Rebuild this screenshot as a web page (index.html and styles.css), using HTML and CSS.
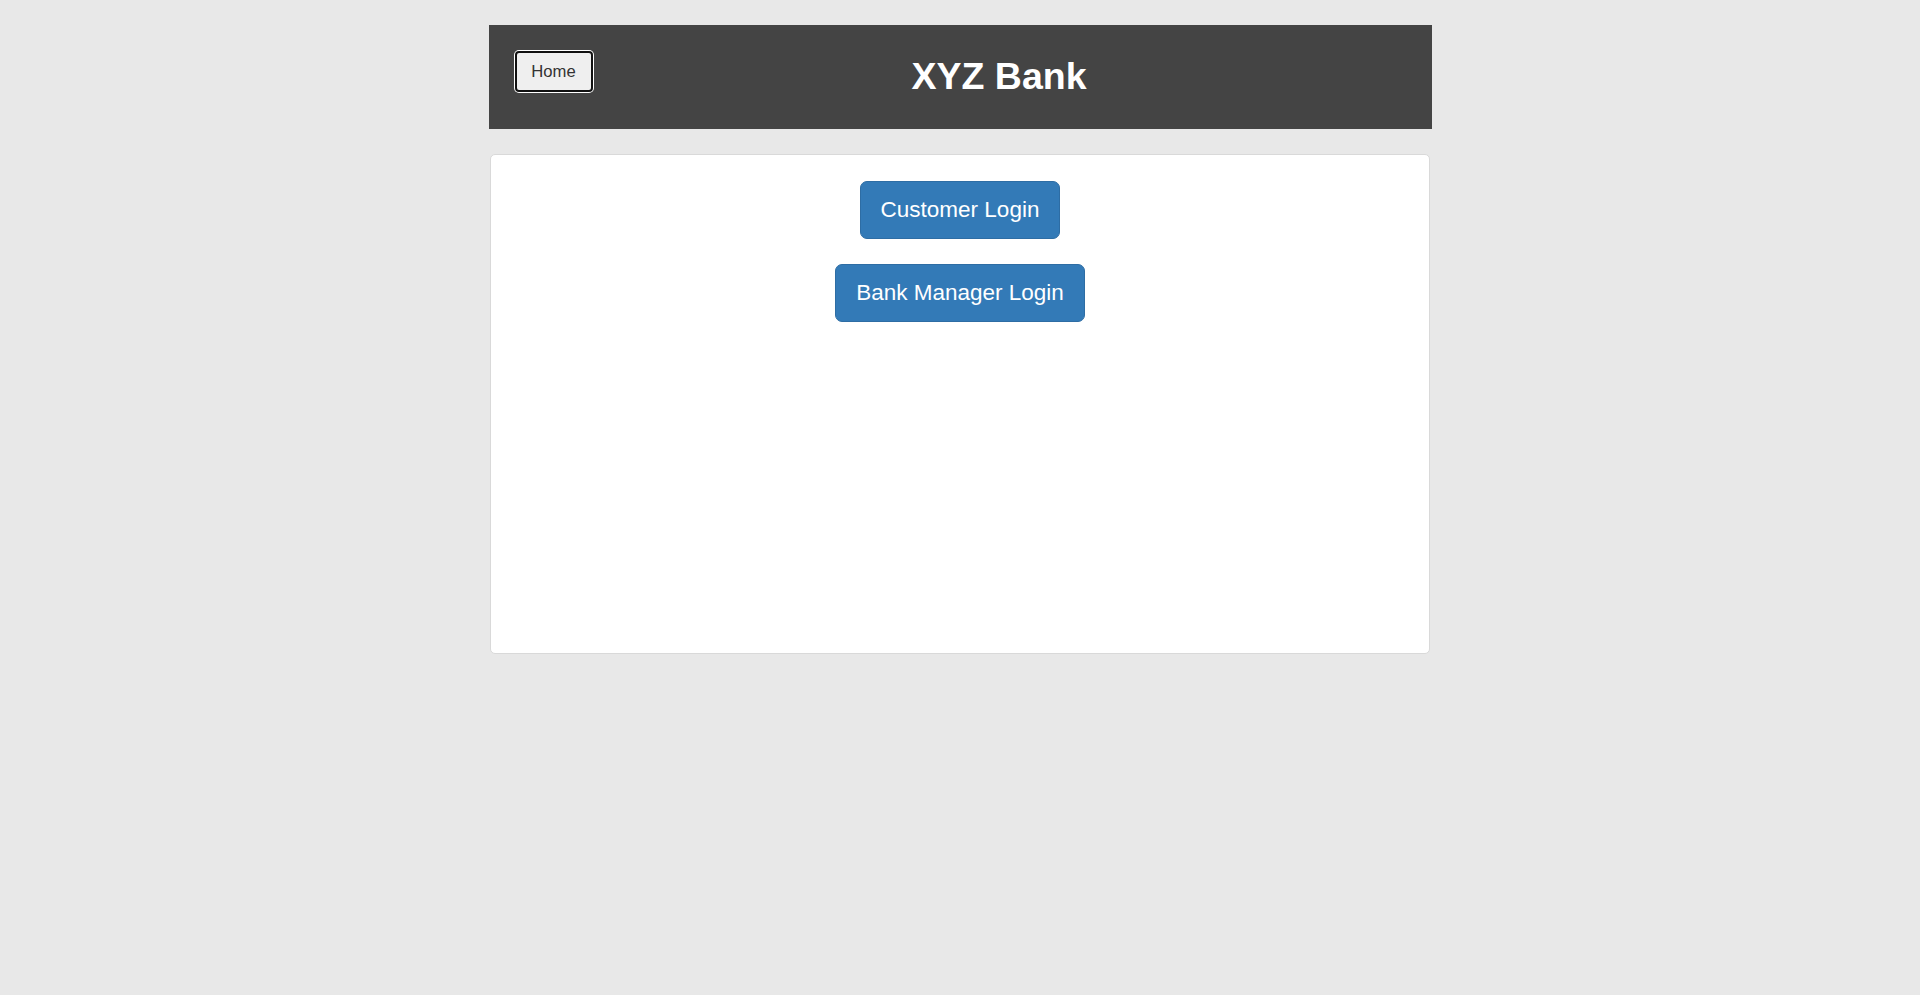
FILE: index.html
```html
<!DOCTYPE html>
<html lang="en">
<head>
<meta charset="utf-8">
<title>XYZ Bank</title>
<link rel="stylesheet" href="styles.css">
</head>
<body>
<div class="page">
  <header class="header">
    <button class="home-btn" type="button">Home</button>
    <strong class="main-heading">XYZ Bank</strong>
  </header>
  <main class="card">
    <button class="btn-primary" type="button">Customer Login</button>
    <button class="btn-primary" type="button">Bank Manager Login</button>
  </main>
</div>
</body>
</html>
```
FILE: styles.css
```css
html, body {
  margin: 0;
  padding: 0;
}
body {
  background: #e8e8e8;
  font-family: "Liberation Sans", Arial, sans-serif;
  min-height: 995px;
}
.page {
  width: 943px;
  margin: 25px auto 0;
  display: flex;
  flex-direction: column;
  align-items: center;
  gap: 25px;
}
.header {
  box-sizing: border-box;
  width: 943px;
  height: 104px;
  background: #444444;
  display: flex;
  align-items: flex-start;
  padding: 0 26px 0 26px;
}
.home-btn {
  box-sizing: border-box;
  margin-top: 26px;
  width: 78px;
  height: 41px;
  padding: 0;
  background: #efefef;
  border: 2px solid #111;
  border-radius: 4px;
  box-shadow: 0 0 0 1px #fff;
  color: #333;
  font-family: "Liberation Sans", Arial, sans-serif;
  font-size: 16.67px;
  cursor: pointer;
}
.main-heading {
  flex: 1;
  text-align: center;
  color: #fff;
  font-size: 37.5px;
  font-weight: bold;
  line-height: 43px;
  margin-top: 30px;
}
.card {
  box-sizing: border-box;
  width: 940px;
  height: 500px;
  background: #fff;
  border: 1px solid #d9d9d9;
  border-radius: 5px;
  display: flex;
  flex-direction: column;
  align-items: center;
  gap: 25px;
  padding-top: 26px;
}
.btn-primary {
  box-sizing: border-box;
  background: #337ab7;
  border: 1px solid #2e6da4;
  border-radius: 7px;
  color: #fff;
  font-family: "Liberation Sans", Arial, sans-serif;
  font-size: 22.5px;
  line-height: 30px;
  padding: 13px 20px;
  cursor: pointer;
}
```
